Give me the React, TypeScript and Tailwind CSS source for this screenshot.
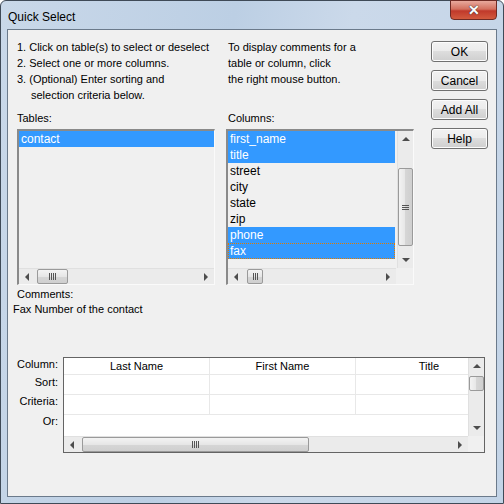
import React from "react";

const Tri = ({ dir, cls = "" }: { dir: "l" | "r" | "u" | "d"; cls?: string }) => {
  const pts =
    dir === "l" ? "4,0 4,8 0,4" : dir === "r" ? "0,0 0,8 4,4" : dir === "u" ? "0,4 8,4 4,0" : "0,0 8,0 4,4";
  const w = dir === "l" || dir === "r" ? 4 : 8;
  const h = dir === "l" || dir === "r" ? 8 : 4;
  return (
    <svg width={w} height={h} viewBox={`0 0 ${w} ${h}`} className={cls}>
      <polygon points={pts} fill="#4d4d4d" />
    </svg>
  );
};

const HThumb = ({ w }: { w: number }) => (
  <div
    className="h-[15px] rounded-[2px] border border-[#9a9a9a] bg-[linear-gradient(to_bottom,#f3f3f3,#e6e6e6_50%,#d6d6d6_50%,#cfcfcf)] flex items-center justify-center"
    style={{ width: w }}
  >
    {w > 20 ? (
      <div className="flex gap-[1px]">
        <div className="w-[1px] h-[7px] bg-[#555]" />
        <div className="w-[1px] h-[7px] bg-[#555]" />
        <div className="w-[1px] h-[7px] bg-[#555]" />
        <div className="w-[1px] h-[7px] bg-[#555]" />
      </div>
    ) : (
      <div className="flex gap-[1px]">
        <div className="w-[1px] h-[7px] bg-[#555]" />
        <div className="w-[1px] h-[7px] bg-[#555]" />
        <div className="w-[1px] h-[7px] bg-[#555]" />
      </div>
    )}
  </div>
);

const HScroll = ({ width, thumbLeft, thumbW }: { width: number; thumbLeft: number; thumbW: number }) => (
  <div className="h-[16px] flex items-center bg-[#ebebeb] border-t border-[#e0e0e0]" style={{ width }}>
    <div className="w-[16px] h-[15px] flex items-center justify-center shrink-0">
      <Tri dir="l" />
    </div>
    <div className="flex-1 h-[15px] relative">
      <div className="absolute top-0" style={{ left: thumbLeft }}>
        <HThumb w={thumbW} />
      </div>
    </div>
    <div className="w-[16px] h-[15px] flex items-center justify-center shrink-0">
      <Tri dir="r" />
    </div>
  </div>
);

const Btn = ({ label }: { label: string }) => (
  <div className="w-[57px] h-[21px] rounded-[3px] border border-[#707070] bg-[linear-gradient(to_bottom,#f2f2f2,#ebebeb_50%,#dddddd_50%,#cfcfcf)] shadow-[inset_0_0_0_1px_#fcfcfc] flex items-center justify-center text-[12px] text-black">
    {label}
  </div>
);

const Row = ({ text, sel = false, focus = false }: { text: string; sel?: boolean; focus?: boolean }) => (
  <div
    className={`h-[16px] leading-[16px] pl-[2px] text-[12px] ${sel ? "bg-[#3399ff] text-white" : "text-black"} ${
      focus ? "outline outline-1 outline-dotted outline-[#e07b00] -outline-offset-1" : ""
    }`}
  >
    {text}
  </div>
);

export default function App() {
  return (
    <div className="w-[504px] h-[504px] bg-white [font-family:'Liberation_Sans',Arial,sans-serif]">
      <div className="w-[504px] h-[504px] rounded-t-[6px] border border-[#3f4a57] bg-[linear-gradient(100deg,#c9d8e9,#bccfe4_40%,#cbd9ea_60%,#c3d4e7)] flex flex-col relative">
        {/* title bar */}
        <div className="h-[28px] flex items-start pl-[7px] pt-[7px] text-[12px] text-black">Quick Select</div>
        <div className="absolute top-[-1px] right-[6px] w-[47px] h-[20px] rounded-b-[4px] border border-[#6e2a24] bg-[linear-gradient(to_bottom,#e8a99d,#d3705f_45%,#c0392b_55%,#d25a3e)] flex items-center justify-center">
          <span className="text-white font-bold text-[14px] leading-none [text-shadow:0_0_1px_#333,0_0_1px_#333]">✕</span>
        </div>
        {/* client */}
        <div className="ml-[6px] mr-[6px] h-[468px] border border-[#6b7a8b] bg-[#f0f0f0] pl-[9px] pt-[9px] text-[11px] text-black">
          <div className="flex">
            {/* tables column */}
            <div className="w-[198px] flex flex-col">
              <div className="h-[71px] leading-[16px] whitespace-nowrap">
                <div>1. Click on table(s) to select or deselect</div>
                <div>2. Select one or more columns.</div>
                <div>3. (Optional) Enter sorting and</div>
                <div className="pl-[14px]">selection criteria below.</div>
              </div>
              <div className="h-[19px] leading-[16px]">Tables:</div>
              <div className="w-[198px] h-[156px] border-t-2 border-l-2 border-[#8a8a8a] border-b border-r border-b-[#fafafa] border-r-[#fafafa] flex flex-col bg-[#f0f0f0]">
                <div className="flex-1">
                  <Row text="contact" sel />
                </div>
                <HScroll width={195} thumbLeft={2} thumbW={31} />
              </div>
            </div>
            {/* columns column */}
            <div className="w-[188px] ml-[11px] flex flex-col">
              <div className="h-[71px] leading-[16px] pl-[2px] whitespace-nowrap">
                <div>To display comments for a</div>
                <div>table or column, click</div>
                <div>the right mouse button.</div>
              </div>
              <div className="h-[19px] leading-[16px] pl-[2px]">Columns:</div>
              <div className="w-[188px] h-[156px] border-t-2 border-l-2 border-[#8a8a8a] border-b border-r border-b-[#fafafa] border-r-[#fafafa] flex flex-col bg-[#f0f0f0]">
                <div className="flex h-[137px]">
                  <div className="w-[167px] flex flex-col">
                    <Row text="first_name" sel />
                    <Row text="title" sel />
                    <Row text="street" />
                    <Row text="city" />
                    <Row text="state" />
                    <Row text="zip" />
                    <Row text="phone" sel />
                    <Row text="fax" sel focus />
                  </div>
                  <div className="w-[16px] ml-[2px] bg-[#ebebeb] border-l border-[#e0e0e0] flex flex-col items-center">
                    <div className="h-[16px] flex items-center justify-center">
                      <Tri dir="u" />
                    </div>
                    <div className="flex-1 w-full relative">
                      <div className="absolute left-0 top-[21px] w-[15px] h-[78px] rounded-[2px] border border-[#9a9a9a] bg-[linear-gradient(to_right,#f3f3f3,#e6e6e6_50%,#d6d6d6_50%,#cfcfcf)] flex flex-col items-center justify-center gap-[1px]">
                        <div className="w-[7px] h-[1px] bg-[#555]" />
                        <div className="w-[7px] h-[1px] bg-[#555]" />
                        <div className="w-[7px] h-[1px] bg-[#555]" />
                      </div>
                    </div>
                    <div className="h-[16px] flex items-center justify-center">
                      <Tri dir="d" />
                    </div>
                  </div>
                </div>
                <div className="flex">
                  <HScroll width={168} thumbLeft={3} thumbW={16} />
                  <div className="w-[17px] h-[16px] bg-[#f0f0f0]" />
                </div>
              </div>
            </div>
            {/* buttons */}
            <div className="ml-[17px] pt-[2px] flex flex-col gap-[8px]">
              <Btn label="OK" />
              <Btn label="Cancel" />
              <Btn label="Add All" />
              <Btn label="Help" />
            </div>
          </div>
          {/* comments */}
          <div className="mt-[3px] leading-[16px]">
            <div className="h-[13px] leading-[13px]">Comments:</div>
            <div className="-ml-[4px] h-[16px]">Fax Number of the contact</div>
          </div>
          {/* grid */}
          <div className="flex mt-[40px] -ml-[9px]">
            <div className="w-[50px] -mt-[1px] flex flex-col items-end text-[11px] leading-[16px]">
              <div className="h-[18px]">Column:</div>
              <div className="h-[19px]">Sort:</div>
              <div className="h-[20px]">Criteria:</div>
              <div className="h-[16px]">Or:</div>
            </div>
            <div className="ml-[5px] w-[422px] h-[96px] border border-[#646464] bg-white flex flex-col">
              <div className="flex h-[78px]">
                <div className="w-[404px] overflow-hidden">
                  <div className="w-[440px] flex flex-col">
                    <div className="h-[17px] flex border-b border-[#e8e8e8]">
                      <div className="w-[146px] shrink-0 border-r border-[#e8e8e8] text-center leading-[17px]">Last Name</div>
                      <div className="w-[146px] shrink-0 border-r border-[#e8e8e8] text-center leading-[17px]">First Name</div>
                      <div className="w-[146px] shrink-0 text-center leading-[17px]">Title</div>
                    </div>
                    <div className="h-[20px] flex border-b border-[#e8e8e8]">
                      <div className="w-[146px] shrink-0 border-r border-[#e8e8e8]" />
                      <div className="w-[146px] shrink-0 border-r border-[#e8e8e8]" />
                      <div className="w-[146px] shrink-0" />
                    </div>
                    <div className="h-[20px] flex border-b border-[#e8e8e8]">
                      <div className="w-[146px] shrink-0 border-r border-[#e8e8e8]" />
                      <div className="w-[146px] shrink-0 border-r border-[#e8e8e8]" />
                      <div className="w-[146px] shrink-0" />
                    </div>
                    <div className="h-[20px]" />
                  </div>
                </div>
                <div className="w-[16px] bg-[#ebebeb] border-l border-[#e0e0e0] flex flex-col items-center">
                  <div className="h-[16px] flex items-center justify-center">
                    <Tri dir="u" />
                  </div>
                  <div className="flex-1 w-full relative">
                    <div className="absolute left-0 top-[2px] w-[15px] h-[15px] rounded-[2px] border border-[#9a9a9a] bg-[linear-gradient(to_right,#f3f3f3,#e6e6e6_50%,#d6d6d6_50%,#cfcfcf)]" />
                  </div>
                  <div className="h-[16px] flex items-center justify-center">
                    <Tri dir="d" />
                  </div>
                </div>
              </div>
              <div className="flex">
                <div className="w-[404px] h-[16px] flex items-center bg-[#ebebeb] border-t border-[#e0e0e0]">
                  <div className="w-[16px] h-[15px] flex items-center justify-center shrink-0">
                    <Tri dir="l" />
                  </div>
                  <div className="flex-1 h-[15px] relative">
                    <div className="absolute top-0 left-[2px]">
                      <HThumb w={227} />
                    </div>
                  </div>
                  <div className="w-[16px] h-[15px] flex items-center justify-center shrink-0">
                    <Tri dir="r" />
                  </div>
                </div>
                <div className="w-[16px] h-[16px] bg-[#f0f0f0]" />
              </div>
            </div>
          </div>
        </div>
      </div>
    </div>
  );
}
